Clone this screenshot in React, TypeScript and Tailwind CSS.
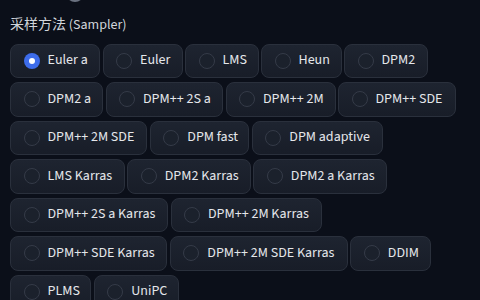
import React from "react";

type Opt = { label: string; w: number };

const rows: Opt[][] = [
  [
    { label: "Euler a", w: 90 },
    { label: "Euler", w: 80 },
    { label: "LMS", w: 73.5 },
    { label: "Heun", w: 80.5 },
    { label: "DPM2", w: 84 },
  ],
  [
    { label: "DPM2 a", w: 93 },
    { label: "DPM++ 2S a", w: 117.5 },
    { label: "DPM++ 2M", w: 110 },
    { label: "DPM++ SDE", w: 117.5 },
  ],
  [
    { label: "DPM++ 2M SDE", w: 137.3 },
    { label: "DPM fast", w: 99.5 },
    { label: "DPM adaptive", w: 131 },
  ],
  [
    { label: "LMS Karras", w: 114.7 },
    { label: "DPM2 Karras", w: 123.6 },
    { label: "DPM2 a Karras", w: 134 },
  ],
  [
    { label: "DPM++ 2S a Karras", w: 158 },
    { label: "DPM++ 2M Karras", w: 151.5 },
  ],
  [
    { label: "DPM++ SDE Karras", w: 157.3 },
    { label: "DPM++ 2M SDE Karras", w: 178 },
    { label: "DDIM", w: 80.5 },
  ],
  [
    { label: "PLMS", w: 81.3 },
    { label: "UniPC", w: 85.5 },
  ],
];

function Radio({ label, w, selected }: Opt & { selected: boolean }) {
  return (
    <label
      className="flex h-[34.5px] shrink-0 items-center gap-[8px] rounded-[8px] border border-[#2a303c] bg-gradient-to-b from-[#1e2430] to-[#181d28] pl-[12.5px] pr-[10px] text-[14px] text-[#e5e7eb]"
      style={{ width: w }}
    >
      {selected ? (
        <span className="flex h-[16px] w-[16px] shrink-0 items-center justify-center rounded-full bg-[#3d6cea]">
          <span className="h-[6px] w-[6px] rounded-full bg-white" />
        </span>
      ) : (
        <span className="h-[16px] w-[16px] shrink-0 rounded-full border border-[#353b48] bg-[#1b212c]" />
      )}
      <span className="whitespace-nowrap">{label}</span>
    </label>
  );
}

export default function App() {
  return (
    <div
      className="relative h-[300px] w-[480px] overflow-hidden bg-[#0b0f19] px-[10px] pt-[15px]"
      style={{ fontFamily: "'Source Sans Pro', 'Source Sans 3', 'Noto Sans CJK SC', sans-serif" }}
    >
      <div className="absolute left-[66px] top-[-16px] h-[18px] w-[18px] rounded-full bg-[#6b7280]" />
      <div className="text-[14px] leading-[20px] text-[#d1d5db]">采样方法 (Sampler)</div>
      <div className="mt-[8.5px] flex flex-col gap-[4px]">
        {rows.map((row, i) => (
          <div key={i} className="flex gap-[2.5px]">
            {row.map((o) => (
              <Radio key={o.label} {...o} selected={o.label === "Euler a"} />
            ))}
          </div>
        ))}
      </div>
    </div>
  );
}
